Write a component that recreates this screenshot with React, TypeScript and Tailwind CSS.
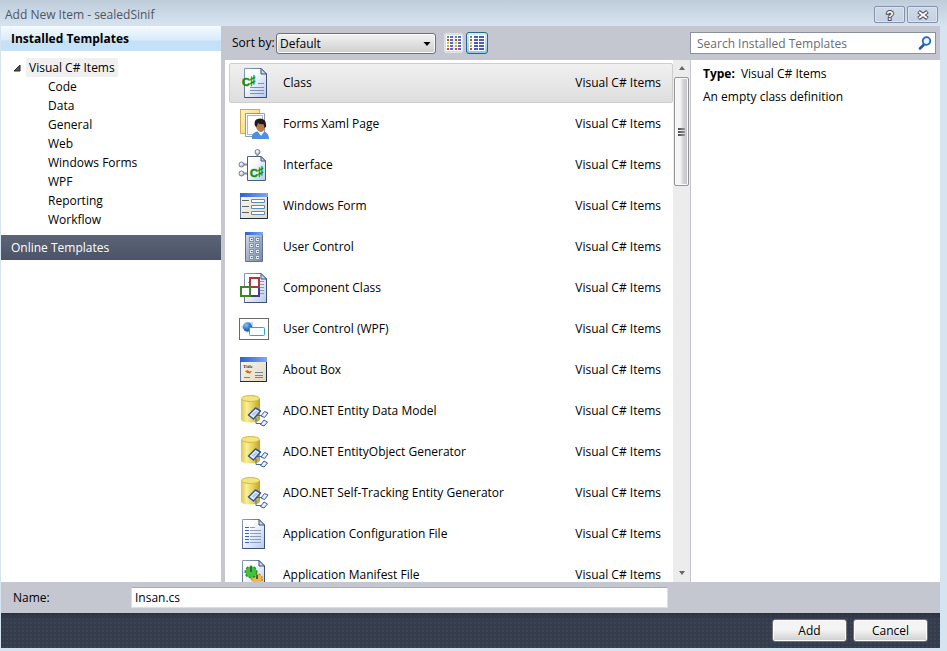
import { useState } from "react";
import type { ReactNode } from "react";
import clsx from "clsx";

const categories = [
  "Code",
  "Data",
  "General",
  "Web",
  "Windows Forms",
  "WPF",
  "Reporting",
  "Workflow",
];

// gradients shared by all of the template icons
function IconDefs() {
  return (
    <svg className="absolute size-0" aria-hidden="true">
      <defs>
        <linearGradient id="paper" x1="0" y1="0" x2="1" y2="1">
          <stop offset="0.3" stopColor="#ffffff" />
          <stop offset="1" stopColor="#b4c8ee" />
        </linearGradient>
        <linearGradient id="edge" x1="0" y1="0" x2="1" y2="1">
          <stop offset="0" stopColor="#8a9cc0" />
          <stop offset="1" stopColor="#2c3c5e" />
        </linearGradient>
        <linearGradient id="titlebar" x1="0" y1="0" x2="1" y2="0">
          <stop offset="0" stopColor="#2a62d4" />
          <stop offset="1" stopColor="#7fa8f4" />
        </linearGradient>
        <linearGradient id="cream" x1="0" y1="0" x2="1" y2="1">
          <stop offset="0" stopColor="#fbf9ee" />
          <stop offset="1" stopColor="#dfd8bd" />
        </linearGradient>
        <linearGradient id="yellowPage" x1="0" y1="0" x2="1" y2="1">
          <stop offset="0" stopColor="#fff3c4" />
          <stop offset="1" stopColor="#f3cf62" />
        </linearGradient>
        <linearGradient id="steel" x1="0" y1="0" x2="1" y2="1">
          <stop offset="0" stopColor="#d5deea" />
          <stop offset="1" stopColor="#7387a5" />
        </linearGradient>
        <linearGradient id="drum" x1="0" y1="0" x2="1" y2="0">
          <stop offset="0" stopColor="#e0c64c" />
          <stop offset="0.3" stopColor="#f8f09a" />
          <stop offset="0.6" stopColor="#e8d458" />
          <stop offset="1" stopColor="#c0a02c" />
        </linearGradient>
        <radialGradient id="ball" cx="0.35" cy="0.3" r="0.8">
          <stop offset="0" stopColor="#8cc4f8" />
          <stop offset="0.6" stopColor="#2470cc" />
          <stop offset="1" stopColor="#123f8c" />
        </radialGradient>
        <radialGradient id="knob" cx="0.4" cy="0.35" r="0.7">
          <stop offset="0" stopColor="#ffffff" />
          <stop offset="1" stopColor="#a4afc4" />
        </radialGradient>
      </defs>
    </svg>
  );
}

function Icon({ children }: { children: ReactNode }) {
  return (
    <svg viewBox="0 0 32 32" className="size-8 shrink-0" aria-hidden="true">
      {children}
    </svg>
  );
}

function Page({ x = 6 }: { x?: number }) {
  return (
    <g transform={`translate(${x} 1)`}>
      <path d="M.5.5H17L22.5 6V29.5H.5Z" fill="url(#paper)" stroke="url(#edge)" />
      <path d="M22.5 6V29.5H.5" fill="none" stroke="#3d5076" />
      <path d="M17 .5V6H22.5Z" fill="#cfd9ec" stroke="#3d5076" strokeLinejoin="round" />
    </g>
  );
}

function CSharp({ x, y }: { x: number; y: number }) {
  return (
    <text
      x={x}
      y={y}
      fill="#0b930b"
      stroke="#0b930b"
      strokeWidth="0.5"
      fontFamily="Liberation Sans, sans-serif"
      fontWeight="700"
      fontSize="11"
    >
      C
      <tspan x={x + 7} fontFamily="DejaVu Sans, sans-serif" fontSize="15">
        ♯
      </tspan>
    </text>
  );
}

function ClassIcon() {
  return (
    <Icon>
      <Page />
      <path d="M20 16.500H26M12 20.500H26M12 23.500H26M12 26.500H26" stroke="#7c90b4" />
      <CSharp x={4} y={19} />
    </Icon>
  );
}

function FormsXamlIcon() {
  return (
    <Icon>
      <path d="M2.5 1.5H21.5V25.5H2.5Z" fill="url(#yellowPage)" stroke="#d3ae50" />
      <path d="M2 1.5H22" stroke="#a3abba" />
      <path d="M7.5 5.5H26.5V28.5H7.5Z" fill="#fff" stroke="#8c9ab4" />
      <path d="M9.5 7.5H24.5V26.5H9.5Z" fill="none" stroke="#5b6f98" strokeDasharray="1 1" />
      <path d="M14 31Q13 25 19 23.500L26 23.500Q31 25 31 31Z" fill="#4f8fdf" />
      <path d="M20 24L23 28L26 24L25 21H20Z" fill="#eef3fb" />
      <path d="M18 16Q18 12 22.500 12T27 16V19Q26 24 22.500 24Q19 23 18 19Z" fill="#b87848" />
      <path d="M17 18Q15 11 22 10.500Q29 11 28 19L26.500 20L25.500 16Q22 17 20 15L18.500 19Z" fill="#1c1c20" />
    </Icon>
  );
}

function InterfaceIcon() {
  return (
    <Icon>
      <path d="M19.500 4V8M6 15.500H10M6 24.500H10" stroke="#8290aa" strokeWidth="2" />
      <path d="M9.500 7.500H23L27.500 12V31.500H9.500Z" fill="url(#paper)" stroke="#4a5d84" />
      <path d="M23 7.500V12H27.500Z" fill="#cfd9ec" stroke="#3d5076" />
      <g fill="url(#knob)" stroke="#71809c">
        <circle cx="19.500" cy="3" r="2.500" />
        <circle cx="3.500" cy="15.500" r="2.500" />
        <circle cx="3.500" cy="24.500" r="2.500" />
      </g>
      <CSharp x={12} y={28} />
    </Icon>
  );
}

function WindowsFormIcon() {
  return (
    <Icon>
      <path d="M2.500 3.500H29.500V28.500H2.500Z" fill="url(#cream)" stroke="#62789f" />
      <path d="M2 28.500H29.500V7" fill="none" stroke="#1d2b45" />
      <path d="M2 3H30V7H2Z" fill="url(#titlebar)" />
      <path d="M4 10.500H11M4 16.500H11M4 22.500H11" stroke="#5a6274" />
      <path d="M13.500 9.500H26.500V12.500H13.500ZM13.500 15.500H26.500V18.500H13.500ZM13.500 21.500H26.500V24.500H13.500Z" fill="#fff" stroke="#5e8cc0" />
    </Icon>
  );
}

function UserControlIcon() {
  return (
    <Icon>
      <path d="M7.500 1.500H24.500V30.500H7.500Z" fill="url(#steel)" stroke="#5f7291" />
      <path d="M7 1H25V4H7Z" fill="url(#titlebar)" />
      {[6, 12, 18, 24].map((y) => (
        <g key={y} fill="#dfe6f0" stroke="#8394ae">
          <rect x="11.500" y={y + 0.5} width="4" height="4" />
          <rect x="17.500" y={y + 0.5} width="4" height="4" />
          <path d={`M13 ${y + 2.5}H14.500M19 ${y + 2.5}H20.500`} stroke="#4f6180" />
        </g>
      ))}
    </Icon>
  );
}

function ComponentIcon() {
  return (
    <Icon>
      <Page />
      <path d="M22 9.500H26M22 12.500H26M22 15.500H26M22 18.500H26M22 21.500H26M10 10.500H12" stroke="#8799b8" />
      <g fill="#fff" strokeWidth="2">
        <rect x="12" y="15" width="9" height="9" stroke="#483c86" />
        <rect x="12" y="6" width="9" height="9" stroke="#b8343a" />
        <rect x="3" y="15" width="9" height="9" stroke="#3c8628" />
      </g>
    </Icon>
  );
}

function WpfControlIcon() {
  return (
    <Icon>
      <rect x="1.500" y="5.500" width="29" height="21" fill="#fff" stroke="#686868" />
      <path d="M3 14L8 9H15V16L9 20Z" fill="#8fbdf0" opacity="0.600" />
      <circle cx="9.500" cy="14" r="4.500" fill="url(#ball)" />
      <rect x="11.500" y="14.500" width="15" height="8" rx="1" fill="#f4fdff" stroke="#27aacb" />
    </Icon>
  );
}

function AboutBoxIcon() {
  return (
    <Icon>
      <path d="M2.500 3.500H28.500V27.500H2.500Z" fill="url(#cream)" stroke="#62789f" />
      <path d="M2 27.500H28.500V7" fill="none" stroke="#1d2b45" />
      <path d="M2 3H29V8H2Z" fill="url(#titlebar)" />
      <text x="5" y="14" fontSize="5" fontWeight="700" fontFamily="Liberation Serif, serif" fill="#333">
        Title
      </text>
      <path d="M5 15L7 17L10 16L11 17.500L14 17L12 19.500L9 19Z" fill="#d3662a" />
      <path d="M17 18.500H25M17 21.500H25M17 23.500H25M6 23.500H12" stroke="#7584a4" />
    </Icon>
  );
}

function EntityIcon() {
  return (
    <Icon>
      <path d="M3 4V24Q3 27.500 12.500 27.500Q22 27.500 22 24V4Z" fill="url(#drum)" />
      <ellipse cx="12.500" cy="3.500" rx="9" ry="3" fill="#f3e47c" stroke="#d2b846" />
      <path d="M19 20.500H26M18 23V28.500H23" fill="none" stroke="#4468a8" />
      <g stroke="#36569c" fill="#eaf1fd" strokeLinejoin="round">
        <path d="M10.500 20L17.500 13L22.500 16L15.500 24Z" strokeWidth="1.500" />
        <path d="M13.500 19.500L18 15.500L20 17L15.500 21Z" fill="#b4c8ee" stroke="none" />
        <path d="M23 21L26.500 16.500L30 18L26.500 22.500Z" />
        <path d="M22.500 29.500L26 25L29.500 27L26 31Z" />
      </g>
    </Icon>
  );
}

function ConfigIcon() {
  return (
    <Icon>
      <Page x={4} />
      <path d="M7 9.500H11M7 12.500H11M7 15.500H11M7 18.500H11M7 21.500H11M7 24.500H11" stroke="#2e62d0" />
      <path d="M12 9.500H17M12 12.500H23M12 15.500H23M12 18.500H23M12 21.500H23M12 24.500H23" stroke="#8d9dbb" />
    </Icon>
  );
}

function ManifestIcon() {
  return (
    <Icon>
      <Page x={4} />
      <circle cx="19" cy="20" r="5" fill="#f2ab28" stroke="#c98a1c" strokeWidth="2" strokeDasharray="2 1.500" />
      <circle cx="19" cy="20" r="4.500" fill="#f6b93c" />
      <circle cx="13" cy="13" r="5.500" fill="#37b536" stroke="#27932a" strokeWidth="2" strokeDasharray="2.500 1.500" />
      <circle cx="13" cy="13" r="5" fill="#43c23e" />
      <path d="M13 8V13M19 16V20" stroke="#4c5c52" strokeWidth="2" />
    </Icon>
  );
}

const templates = [
  { name: "Class", icon: ClassIcon },
  { name: "Forms Xaml Page", icon: FormsXamlIcon },
  { name: "Interface", icon: InterfaceIcon },
  { name: "Windows Form", icon: WindowsFormIcon },
  { name: "User Control", icon: UserControlIcon },
  { name: "Component Class", icon: ComponentIcon },
  { name: "User Control (WPF)", icon: WpfControlIcon },
  { name: "About Box", icon: AboutBoxIcon },
  { name: "ADO.NET Entity Data Model", icon: EntityIcon },
  { name: "ADO.NET EntityObject Generator", icon: EntityIcon },
  { name: "ADO.NET Self-Tracking Entity Generator", icon: EntityIcon },
  { name: "Application Configuration File", icon: ConfigIcon },
  { name: "Application Manifest File", icon: ManifestIcon },
];

function TitleBar() {
  const button =
    "flex h-[17px] w-[31px] items-center justify-center rounded-xs border border-[#8491ac] bg-linear-to-b from-[#cfdae6] to-[#c3d2e3] shadow-[inset_0_0_0_1px_#dbe5ef]";
  return (
    <header className="flex h-[26px] shrink-0 items-center justify-between bg-linear-to-b from-[#bfcddb] to-[#d6e3f1] pt-[3px] pr-[9px] pl-[5px]">
      <h1 className="text-[#4f565e]">Add New Item - sealedSinif</h1>
      <div className="flex gap-[2px]">
        <button className={button} aria-label="Help">
          <svg viewBox="0 0 12 12" className="size-3" aria-hidden="true">
            <text
              x="6"
              y="10.500"
              textAnchor="middle"
              fontFamily="Liberation Sans, sans-serif"
              fontWeight="700"
              fontSize="12"
              fill="#fff"
              stroke="#454a5c"
              strokeWidth="2"
              paintOrder="stroke"
            >
              ?
            </text>
          </svg>
        </button>
        <button className={button} aria-label="Close">
          <svg viewBox="0 0 12 12" className="size-3" aria-hidden="true">
            <path d="M1.500 2.500L10.500 9.500M10.500 2.500L1.500 9.500" stroke="#454a5c" strokeWidth="4" />
            <path d="M2 3L10 9M10 3L2 9" stroke="#fff" strokeWidth="2" />
          </svg>
        </button>
      </div>
    </header>
  );
}

function Sidebar() {
  return (
    <nav className="w-[220px] shrink-0 bg-white">
      <h2 className="h-[25px] bg-linear-to-b from-[#f4faff] from-0% via-[#d9ecfa] via-55% to-[#c5e1f7] to-60% pl-[10px] leading-[25px] font-bold">
        Installed Templates
      </h2>
      <div className="pt-[7px] pb-[6px] leading-[19px]">
        <div className="flex items-center pl-3">
          <svg viewBox="0 0 8 8" className="mr-[5px] size-2" aria-hidden="true">
            <path d="M7 1V7H1Z" fill="#595959" stroke="#262626" />
          </svg>
          <a href="#items" className="bg-[#f0f0f0] px-[3px]">
            Visual C# Items
          </a>
        </div>
        <ul className="pl-[47px]">
          {categories.map((category) => (
            <li key={category}>
              <a href="#items">{category}</a>
            </li>
          ))}
        </ul>
      </div>
      <h2 className="h-[25px] bg-linear-to-b from-[#5c6577] to-[#4b5466] pl-[10px] leading-[25px] text-white">
        Online Templates
      </h2>
    </nav>
  );
}

const dots = ["#4f9a54", "#d8402c", "#d9c62e", "#a8b832", "#d8402c"];

function SmallIconsGlyph() {
  return (
    <svg viewBox="0 0 16 16" className="size-4" aria-hidden="true">
      <path d="M0 0H7.500V16H0ZM8.500 0H16V16H8.500Z" fill="#fff" />
      {dots.map((color, i) => (
        <g key={i} strokeWidth="2">
          <path d={`M1 ${i * 3 + 2}H3M9 ${i * 3 + 2}H11`} stroke={color} />
          <path d={`M4 ${i * 3 + 2}H7M12 ${i * 3 + 2}H15`} stroke="#5a68c8" />
        </g>
      ))}
    </svg>
  );
}

function MediumIconsGlyph() {
  return (
    <svg viewBox="0 0 16 16" className="size-4" aria-hidden="true">
      <path d="M0 0H16V16H0Z" fill="#fff" />
      {dots.map((color, i) => (
        <g key={i} strokeWidth="2">
          <path d={`M1 ${i * 3 + 2}H3`} stroke={color} />
          <path d={`M5 ${i * 3 + 2}H9M10 ${i * 3 + 2}H15`} stroke="#4a5ac0" />
        </g>
      ))}
    </svg>
  );
}

function Toolbar() {
  return (
    <div className="flex h-[34px] shrink-0 items-center pr-1 pl-[11px]">
      <label htmlFor="sort" className="w-11">
        Sort by:
      </label>
      <div className="relative">
        <select
          id="sort"
          className="block h-[21px] w-[160px] appearance-none rounded-[3px] border border-[#707070] bg-linear-to-b from-[#f3f3f3] to-[#cfcfcf] px-[3px] leading-[19px] shadow-[inset_0_0_0_1px_#fafafa]"
        >
          <option>Default</option>
          <option>Name Ascending</option>
          <option>Name Descending</option>
        </select>
        <svg viewBox="0 0 8 4" className="pointer-events-none absolute top-[9px] right-[5px] h-1 w-2" aria-hidden="true">
          <path d="M0.500 0H7.500L4 4Z" fill="#000" />
        </svg>
      </div>
      <button
        aria-label="Small icons"
        className="ml-2 flex h-5 w-[19px] items-center justify-center rounded-xs border border-[#dfe2e8] bg-[#d9dce2]"
      >
        <SmallIconsGlyph />
      </button>
      <button
        aria-label="Medium icons"
        className="ml-[3px] flex size-[22px] items-center justify-center rounded-[3px] border border-[#2c628b] bg-linear-to-b from-[#d4ecf9] to-[#8fcbec]"
      >
        <MediumIconsGlyph />
      </button>
      <div className="relative ml-auto w-[246px]">
        <input
          type="search"
          aria-label="Search Installed Templates"
          placeholder="Search Installed Templates"
          className="block h-[22px] w-full border border-[#8a90a0] bg-white pr-7 pl-[6px] placeholder:text-[#6d6d6d] focus:outline-none"
        />
        <svg viewBox="0 0 14 14" className="absolute top-1 right-1 size-[14px]" aria-hidden="true">
          <path d="M6 8.500L2 12.500" stroke="#28549c" strokeWidth="2.500" strokeLinecap="round" />
          <circle cx="8.500" cy="5" r="3.800" fill="#e9f4fd" stroke="#2466b8" strokeWidth="1.800" />
        </svg>
      </div>
    </div>
  );
}

function ScrollBar() {
  return (
    <div className="flex w-[17px] shrink-0 flex-col items-center bg-[#ececec] pt-[6px] pb-[7px]">
      <svg viewBox="0 0 6 4" className="h-1 w-[6px]" aria-hidden="true">
        <path d="M0 4H6L3 0Z" fill="#666" />
      </svg>
      <div className="mt-[7px] flex h-[109px] w-[15px] flex-col items-center justify-center gap-px rounded-xs border border-[#959595] bg-linear-to-r from-[#f5f5f5] from-40% via-[#d6d6da] via-60% to-[#c4c4c8] shadow-[inset_0_0_0_1px_#fafafa]">
        <span className="h-[2px] w-[7px] bg-linear-to-r from-[#4a4a4a] to-[#9a9a9a]" />
        <span className="h-[2px] w-[7px] bg-linear-to-r from-[#4a4a4a] to-[#9a9a9a]" />
        <span className="h-[2px] w-[7px] bg-linear-to-r from-[#4a4a4a] to-[#9a9a9a]" />
      </div>
      <svg viewBox="0 0 6 4" className="mt-auto h-1 w-[6px]" aria-hidden="true">
        <path d="M0 0H6L3 4Z" fill="#666" />
      </svg>
    </div>
  );
}

function TemplateList() {
  const [selected, setSelected] = useState("Class");

  return (
    <div className="flex min-w-0 flex-1 bg-white">
      <ul className="flex min-w-0 flex-1 flex-col gap-px overflow-hidden pt-[3px] pl-1">
        {templates.map(({ name, icon: TemplateIcon }) => (
          <li key={name} className="shrink-0">
            <button
              type="button"
              onClick={() => setSelected(name)}
              className={clsx(
                "flex h-10 w-full items-center rounded-xs border pr-[11px] pl-2 text-left",
                selected === name
                  ? "border-[#cdcdcd] bg-linear-to-b from-[#f0f0f0] to-[#dedede]"
                  : "border-transparent"
              )}
            >
              <TemplateIcon />
              <span className="ml-[13px] flex-1">{name}</span>
              <span>Visual C# Items</span>
            </button>
          </li>
        ))}
      </ul>
      <ScrollBar />
    </div>
  );
}

function Details() {
  return (
    <aside className="w-[250px] shrink-0 border-l border-[#c4c7d0] bg-white pt-[6px] pl-3">
      <p className="leading-4">
        <strong className="mr-[6px]">Type:</strong>
        Visual C# Items
      </p>
      <p className="mt-[7px] leading-4">An empty class definition</p>
    </aside>
  );
}

function Footer() {
  const button =
    "h-[23px] w-[75px] rounded-[3px] border border-[#707070] bg-linear-to-b from-[#f4f4f4] from-45% to-[#cfcfcf] shadow-[inset_0_0_0_1px_#fcfcfc]";
  return (
    <footer className="flex h-[35px] shrink-0 items-center justify-end gap-[6px] bg-[#353d4c] bg-[radial-gradient(#3c4557_1px,transparent_1px)] bg-size-[4px_4px] pr-3 shadow-[inset_0_4px_4px_-2px_#282e3b]">
      <button type="submit" className={button}>
        Add
      </button>
      <button type="button" className={button}>
        Cancel
      </button>
    </footer>
  );
}

export default function App() {
  return (
    <div className="flex h-screen flex-col bg-[#d6e3f1] pb-[3px] font-['Open_Sans','Noto_Sans',sans-serif] text-[12px] leading-4 text-black">
      <IconDefs />
      <TitleBar />
      <form
        className="mr-[7px] ml-px flex min-h-0 flex-1 flex-col bg-[#c4c7d0]"
        onSubmit={(e) => e.preventDefault()}
      >
        <main className="flex min-h-0 flex-1">
          <Sidebar />
          <section className="flex min-w-0 flex-1 flex-col">
            <Toolbar />
            <div className="ml-1 flex min-h-0 flex-1">
              <TemplateList />
              <Details />
            </div>
          </section>
        </main>
        <div className="flex h-[31px] shrink-0 items-center pl-3">
          <label htmlFor="name" className="w-[118px]">
            Name:
          </label>
          <input
            id="name"
            type="text"
            defaultValue="Insan.cs"
            className="h-[21px] w-[537px] border border-t-[#a9acb5] border-r-[#dadde3] border-b-[#dadde3] border-l-[#dadde3] bg-white px-[3px] focus:outline-none"
          />
        </div>
        <Footer />
      </form>
    </div>
  );
}
